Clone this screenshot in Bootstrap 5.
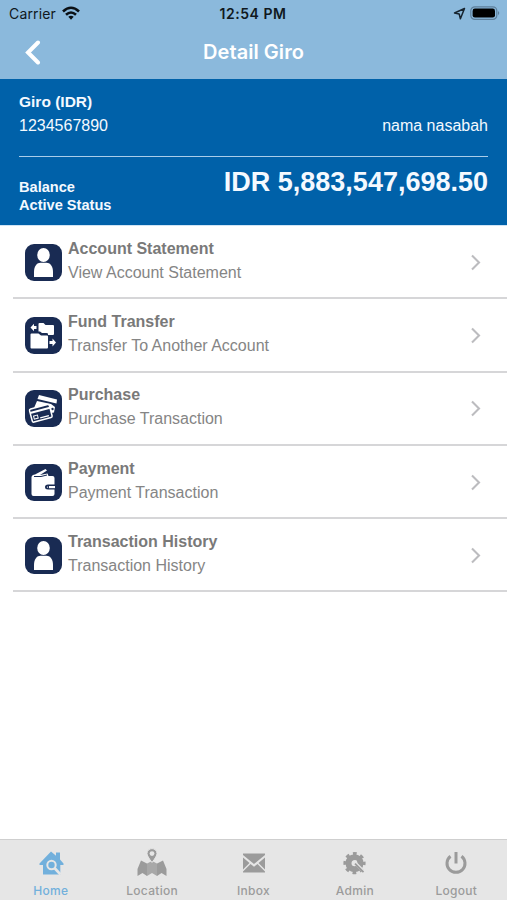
<!DOCTYPE html>
<html lang="en">
<head>
<meta charset="utf-8">
<meta name="viewport" content="width=device-width, initial-scale=1">
<title>Detail Giro</title>
<link href="https://cdn.jsdelivr.net/npm/bootstrap@5.3.0/dist/css/bootstrap.min.css" rel="stylesheet">
<style>
body{font-family:"Liberation Sans",Arial,sans-serif;height:900px;overflow:hidden;background:#fff}
svg{display:block;flex:none}
.top-area{background:#8bb9dc;height:79px;font-family:Inter,sans-serif}
.status-bar{height:27px;padding:0 7px 0 9px;color:#101820;font-size:14px;line-height:27px}
.carrier{letter-spacing:.15px}
.clock{font-weight:600;letter-spacing:.55px;margin-right:3px}
.side{width:120px}
.title-bar{height:51px;padding:0 23px}
.title-bar h1{font-size:20px;font-weight:600;line-height:51px;letter-spacing:.05px}
.account{background:#0061a9;height:147px;padding:14px 19px 0;color:#f4f9ff;border-bottom:1px solid #cfe4f5}
.acc-name{font-size:15.5px;line-height:18px;font-weight:700}
.acc-row{font-size:16px;line-height:20px;margin-top:5px}
.rule{height:1px;background:#a9cdea;margin-top:20px}
.bal-labels{font-size:14.6px;line-height:18px;font-weight:700;padding-top:21px}
.amount{font-size:27px;line-height:30px;font-weight:700;padding-top:10px}
.menu-row{height:73.3px;margin-left:13px;padding:0 25px 0 12px;border-bottom:2px solid #d6d6d8;color:#797979}
.menu-row .tile{margin:1px 6px 0 0}
.menu-row .words{padding-bottom:2px}
.label-a{font-size:16px;line-height:24px;font-weight:700}
.label-b{font-size:16px;line-height:24px;color:#858585}
.tabs{height:61px;background:#e6e6e6;border-top:1px solid #cfcfcf;font-family:Inter,sans-serif;color:#9b9b9b}
.tab{font-size:12px;line-height:14px;font-weight:500;letter-spacing:.3px;padding-top:8px}
.tab span{margin-top:4px}
.tab.on{color:#72b0dc}
.tab svg{width:34px;height:32px}
</style>
<script src="https://cdn.jsdelivr.net/npm/bootstrap@5.3.0/dist/js/bootstrap.bundle.min.js"></script>
</head>
<body class="d-flex flex-column">
<svg width="0" height="0" class="position-absolute">
<symbol id="person" viewBox="0 0 37 37"><rect width="37" height="37" rx="9" fill="#192b53"/><ellipse cx="18.500" cy="11" rx="6.300" ry="7" fill="#fff"/><path d="M9 33V28C9 22 12 18.700 15.500 18.700H21.500C25 18.700 28 22 28 28V33Z" fill="#fff"/></symbol>
<symbol id="chev" viewBox="0 0 12 18"><path d="M2 2.500L9 9.500L2 16.500" fill="none" stroke="#bcbcbf" stroke-width="2.100"/></symbol>
</svg>
<header class="top-area">
  <div class="status-bar d-flex justify-content-between align-items-center">
    <div class="side d-flex align-items-center"><span class="carrier">Carrier</span>
      <svg class="ms-1" width="20" height="16" viewBox="0 0 20 16"><g transform="translate(1 0)" fill="none" stroke="#0b1015" stroke-width="2.600"><path d="M2 5.500Q10 -2 18 5.500"/><path d="M5 8.800Q10 4.200 15 8.800"/></g><path d="M8.300 10.800Q11 8.500 13.700 10.800L11 13.700Z" fill="#0b1015"/></svg>
    </div>
    <span class="clock">12:54 PM</span>
    <div class="side d-flex justify-content-end align-items-center">
      <svg width="13" height="14" viewBox="0 0 13 14"><path d="M11.500 1.500L1.500 6L6.200 7L7.400 11.800Z" fill="none" stroke="#17242f" stroke-width="1.500" stroke-linejoin="round"/></svg>
      <svg class="ms-1" width="30" height="15" viewBox="0 0 30 15"><rect x=".8" y=".8" width="26" height="12.600" rx="4" fill="none" stroke="#5d7f9b" stroke-width="1.200"/><rect x="2.600" y="2.600" width="22.400" height="9" rx="2.300" fill="#000"/><path d="M28 5Q30.500 7.100 28 9.200Z" fill="#5d7f9b"/></svg>
    </div>
  </div>
  <div class="title-bar d-flex justify-content-between align-items-center text-white">
    <svg width="20" height="26" viewBox="0 0 20 26"><path d="M15 2.500L5 12.500L15 22.500" fill="none" stroke="#fff" stroke-width="4" stroke-linecap="round"/></svg>
    <h1 class="mb-0">Detail Giro</h1>
    <svg width="20" height="26"></svg>
  </div>
</header>
<section class="account">
  <div class="acc-name">Giro (IDR)</div>
  <div class="acc-row d-flex justify-content-between"><span>1234567890</span><span>nama nasabah</span></div>
  <div class="rule"></div>
  <div class="d-flex justify-content-between">
    <div class="bal-labels"><div>Balance</div><div>Active Status</div></div>
    <div class="amount">IDR 5,883,547,698.50</div>
  </div>
</section>
<main class="flex-grow-1">
  <div class="menu-row d-flex align-items-center"><svg class="tile" width="37" height="37"><use href="#person"/></svg><div class="words flex-grow-1"><div class="label-a">Account Statement</div><div class="label-b">View Account Statement</div></div><svg width="12" height="18"><use href="#chev"/></svg></div>
  <div class="menu-row d-flex align-items-center"><svg class="tile" width="37" height="37" viewBox="0 0 37 37"><rect width="37" height="37" rx="9" fill="#192b53"/><g fill="#fff"><path d="M13.500 7Q13.500 6 14.500 6H18.500L20.500 8H28Q29 8 29 9V17Q29 18 28 18H23V16.500L21.500 16H17L15 14.500H13.500Z"/><path d="M5.500 17.500Q5.500 16.500 6.500 16.500H13.500L16 18.500H22Q23 18.500 23 19.500V30.500Q23 31.500 22 31.500H6.500Q5.500 31.500 5.500 30.500Z"/><path d="M5.500 10.500L9 6.800V9H11.500V12H9V14.200Z"/><path d="M31 25.500L27.500 21.500V24H24.500V27H27.500V29.500Z"/></g></svg><div class="words flex-grow-1"><div class="label-a">Fund Transfer</div><div class="label-b">Transfer To Another Account</div></div><svg width="12" height="18"><use href="#chev"/></svg></div>
  <div class="menu-row d-flex align-items-center"><svg class="tile" width="37" height="37" viewBox="0 0 37 37"><rect width="37" height="37" rx="9" fill="#192b53"/><path d="M14 5L32 9.500L31.500 13.500L12.500 9Z" fill="#fff"/><path d="M12 11L26 14L30 17L29 22.500L26 23L24 14.500L9 18Z" fill="#fff"/><circle cx="27.500" cy="19" r="1.200" fill="#192b53"/><g transform="rotate(-15 16 23)"><rect x="5.500" y="16.500" width="20.500" height="13.500" rx="1.500" fill="#192b53" stroke="#fff" stroke-width="1.500"/><path d="M5.500 19.200H26V21.200H5.500Z" fill="#fff"/><rect x="8" y="24" width="4" height="3.200" fill="none" stroke="#fff"/><path d="M14 27.500H23" stroke="#fff" stroke-width="1.300"/></g></svg><div class="words flex-grow-1"><div class="label-a">Purchase</div><div class="label-b">Purchase Transaction</div></div><svg width="12" height="18"><use href="#chev"/></svg></div>
  <div class="menu-row d-flex align-items-center"><svg class="tile" width="37" height="37" viewBox="0 0 37 37"><rect width="37" height="37" rx="9" fill="#192b53"/><path d="M6.500 13Q7 10.500 10 10.500L20.500 5L22 6.500L15 11L22.500 9.500L23.500 12H27.500Q29.500 12 29.500 14V30Q29.500 32 27.500 32H8.500Q6.500 32 6.500 30Z" fill="#fff"/><path d="M9 12.500H16L22 11" fill="none" stroke="#192b53" stroke-width="1"/><path d="M31 20.500H23Q20 20.500 20 23Q20 25.500 23 25.500H31Z" fill="#192b53"/><rect x="24" y="22" width="6" height="2.200" fill="#fff"/><circle cx="22.500" cy="23.100" r=".7" fill="#fff"/></svg><div class="words flex-grow-1"><div class="label-a">Payment</div><div class="label-b">Payment Transaction</div></div><svg width="12" height="18"><use href="#chev"/></svg></div>
  <div class="menu-row d-flex align-items-center"><svg class="tile" width="37" height="37"><use href="#person"/></svg><div class="words flex-grow-1"><div class="label-a">Transaction History</div><div class="label-b">Transaction History</div></div><svg width="12" height="18"><use href="#chev"/></svg></div>
</main>
<nav class="tabs d-flex">
  <div class="tab on col d-flex flex-column align-items-center"><svg viewBox="0 0 34 32"><path d="M17 3.500L22 7.700V4.500H26V11.500L29.500 15.500V17H26.300V26.500H9V17H5.500V15.500Z" fill="currentColor"/><circle cx="17.500" cy="17" r="4.200" fill="none" stroke="#e6e6e6" stroke-width="2"/><path d="M20.500 20L26.500 26.500" stroke="#e6e6e6" stroke-width="2.600"/></svg><span>Home</span></div>
  <div class="tab col d-flex flex-column align-items-center"><svg viewBox="0 0 34 32"><path fill="currentColor" d="M6 12.500L12 15.500V28L7.500 25L2.500 28V21ZM22 15.500L28 12.500L31.500 21V28L26.500 25L22 28Z"/><path fill="#a8a8a8" d="M12 15.500L17 13V25L12 28ZM17 13L22 15.500V28L17 25Z"/><path d="M17 14.500Q12 8 12 5.600A5 5 0 0 1 22 5.600Q22 8 17 14.500Z" fill="currentColor" stroke="#e6e6e6" stroke-width="1"/><circle cx="17" cy="5.600" r="2.400" fill="#e6e6e6"/></svg><span>Location</span></div>
  <div class="tab col d-flex flex-column align-items-center"><svg viewBox="0 0 34 32"><path fill="currentColor" d="M6 5.500H28V7L17 16L6 7ZM6 9.500L12.500 15L6 21.500ZM28 9.500L21.500 15L28 21.500ZM13.500 16L17 18.700L20.500 16L28 23.500V24.500H6V23.500Z"/></svg><span>Inbox</span></div>
  <div class="tab col d-flex flex-column align-items-center"><svg viewBox="0 0 34 32"><g transform="translate(-.5 -.8)"><g fill="none" stroke="currentColor"><circle cx="17" cy="16" r="6" stroke-width="6"/><circle cx="17" cy="16" r="9.500" stroke-width="3.200" stroke-dasharray="3.700 3.762" stroke-dashoffset="1.850"/></g><path d="M17.500 13V16L20 18L26 24" fill="none" stroke="#e6e6e6" stroke-width="3"/><path d="M17.500 16.500L26 25" stroke="currentColor" stroke-width="1.800"/></g></svg><span>Admin</span></div>
  <div class="tab col d-flex flex-column align-items-center"><svg viewBox="0 0 34 32"><path d="M11.500 8.200A9 9 0 1 0 22.500 8.200M17 4V15.500" fill="none" stroke="currentColor" stroke-width="3"/></svg><span>Logout</span></div>
</nav>
</body>
</html>
